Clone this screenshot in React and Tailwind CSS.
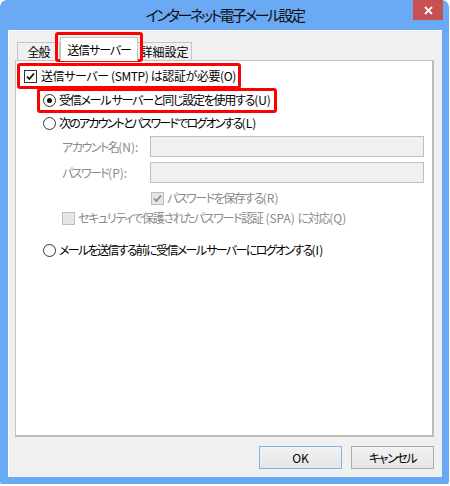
import React from "react";

const font = "font-['Noto_Sans_CJK_JP','Noto_Sans',sans-serif] [font-feature-settings:'palt']";

function Check({ checked, disabled }) {
  return (
    <span
      className={`w-[13px] h-[13px] shrink-0 border flex items-center justify-center ${
        disabled ? "border-[#bcbcbc] bg-[#e6e6e6]" : "border-[#333] bg-white"
      }`}
    >
      {checked && (
        <svg width="9" height="9" viewBox="0 0 9 9">
          <path
            d="M1 4.5 L3.4 7 L8 1.5"
            fill="none"
            stroke={disabled ? "#8a8a8a" : "#111"}
            strokeWidth="1.8"
          />
        </svg>
      )}
    </span>
  );
}

function Radio({ checked }) {
  return (
    <span className="w-[13px] h-[13px] shrink-0 rounded-full border border-[#333] bg-white flex items-center justify-center">
      {checked && <span className="w-[5px] h-[5px] rounded-full bg-[#111]" />}
    </span>
  );
}

export default function App() {
  return (
    <div className={`relative w-[450px] h-[486px] bg-white text-[12px] text-black ${font}`}>
      {/* window frame */}
      <div className="w-[449px] h-[484px] bg-[#6aa9f3] rounded-t-[7px] rounded-b-[2px] flex flex-col">
        {/* title bar */}
        <div className="h-[30px] grid grid-cols-[1fr_auto_1fr] items-start">
          <div />
          <p className="text-[15px] leading-[30px] text-[#111] tracking-[-2.6px]">
            インターネット電子メール設定
          </p>
          <div className="justify-self-end mr-[6px] w-[30px] h-[20px] bg-[#c75050] flex items-center justify-center">
            <svg width="9" height="9" viewBox="0 0 9 9">
              <path d="M1 1 L8 8 M8 1 L1 8" stroke="#fff" strokeWidth="1.8" />
            </svg>
          </div>
        </div>

        {/* client area */}
        <div className="ml-[8px] mr-[7px] h-[447px] bg-[#f0f0f0] border-l border-t border-white pt-[6px] pl-[6px] pr-[8px] flex flex-col">
          {/* tabs */}
          <div className="h-[23px] pl-[2px] flex items-end">
            <div className="h-[18px] w-[43px] border border-b-0 border-[#c4c4c4] bg-[#f0f0f0] flex items-center justify-center tracking-[-1px]">
              全般
            </div>
            <div className="relative z-10 -mb-px h-[24px] w-[78px] border border-b-0 border-[#c4c4c4] bg-white flex items-center justify-center tracking-[-1.1px]">
              送信サーバー
            </div>
            <div className="h-[18px] w-[54px] border border-b-0 border-l-0 border-[#c4c4c4] bg-[#f0f0f0] flex items-center justify-center">
              詳細設定
            </div>
          </div>

          {/* tab panel */}
          <div className="h-[377px] bg-white border border-[#c4c4c4] border-r-2 border-b-2 border-r-[#bcbcbc] border-b-[#bcbcbc] flex flex-col">
            <div className="mt-[3px] h-[24px] pl-[8px] flex items-center gap-[4px]">
              <Check checked />
              <span className="tracking-[-0.4px]">送信サーバー (SMTP) は認証が必要(O)</span>
            </div>
            <div className="h-[24px] pl-[27px] flex items-center gap-[3px]">
              <Radio checked />
              <span>
                <span className="tracking-[-1.25px]">受信メール サーバーと同じ設定を使用する</span>(U)
              </span>
            </div>
            <div className="h-[22px] pl-[27px] flex items-center gap-[3px]">
              <Radio />
              <span>
                <span className="tracking-[-1.78px]">次のアカウントとパスワードでログオンする</span>(L)
              </span>
            </div>
            <div className="mt-[2px] h-[21px] pl-[46px] flex items-center">
              <span className="w-[88px] text-[#8a8a8a]">
                <span className="tracking-[-1.45px]">アカウント名</span>(N):
              </span>
              <div className="w-[274px] h-[21px] border border-[#b7c0cc] bg-[#f0f0f0]" />
            </div>
            <div className="mt-[5px] h-[21px] pl-[46px] flex items-center">
              <span className="w-[88px] text-[#8a8a8a]">
                <span className="tracking-[-1.6px]">パスワード</span>(P):
              </span>
              <div className="w-[274px] h-[21px] border border-[#b7c0cc] bg-[#f0f0f0]" />
            </div>
            <div className="mt-[5px] h-[20px] pl-[135px] flex items-center gap-[3px] text-[#8a8a8a]">
              <Check checked disabled />
              <span>
                <span className="tracking-[-1.5px]">パスワードを保存する</span>(R)
              </span>
            </div>
            <div className="h-[20px] pl-[46px] flex items-center gap-[3px] text-[#8a8a8a]">
              <Check disabled />
              <span>
                <span className="tracking-[-1.3px]">セキュリティで保護されたパスワード認証</span> (SPA){" "}
                <span className="tracking-[-1.3px]">に対応</span>(Q)
              </span>
            </div>
            <div className="mt-[12px] h-[20px] pl-[27px] flex items-center gap-[3px]">
              <Radio />
              <span>
                <span className="tracking-[-1.67px]">メールを送信する前に受信メール サーバーにログオンする</span>(I)
              </span>
            </div>
          </div>

          {/* buttons */}
          <div className="mt-[9px] flex justify-end gap-[9px]">
            <button className="w-[83px] h-[23px] border border-[#7eb4ea] bg-gradient-to-b from-[#f2f2f2] to-[#e5e5e5]">
              OK
            </button>
            <button className="w-[83px] h-[23px] border border-[#acacac] bg-gradient-to-b from-[#f2f2f2] to-[#e5e5e5] tracking-[-1.4px]">
              キャンセル
            </button>
          </div>
        </div>
      </div>

      {/* red annotation boxes */}
      <div className="absolute left-[55px] top-[32px] w-[88px] h-[30px] border-[3px] border-[#ff0000] rounded-[3px]" />
      <div className="absolute left-[17px] top-[63px] w-[224px] h-[26px] border-[3px] border-[#ff0000] rounded-[3px]" />
      <div className="absolute left-[37px] top-[88px] w-[240px] h-[25px] border-[3px] border-[#ff0000] rounded-[3px]" />
    </div>
  );
}
